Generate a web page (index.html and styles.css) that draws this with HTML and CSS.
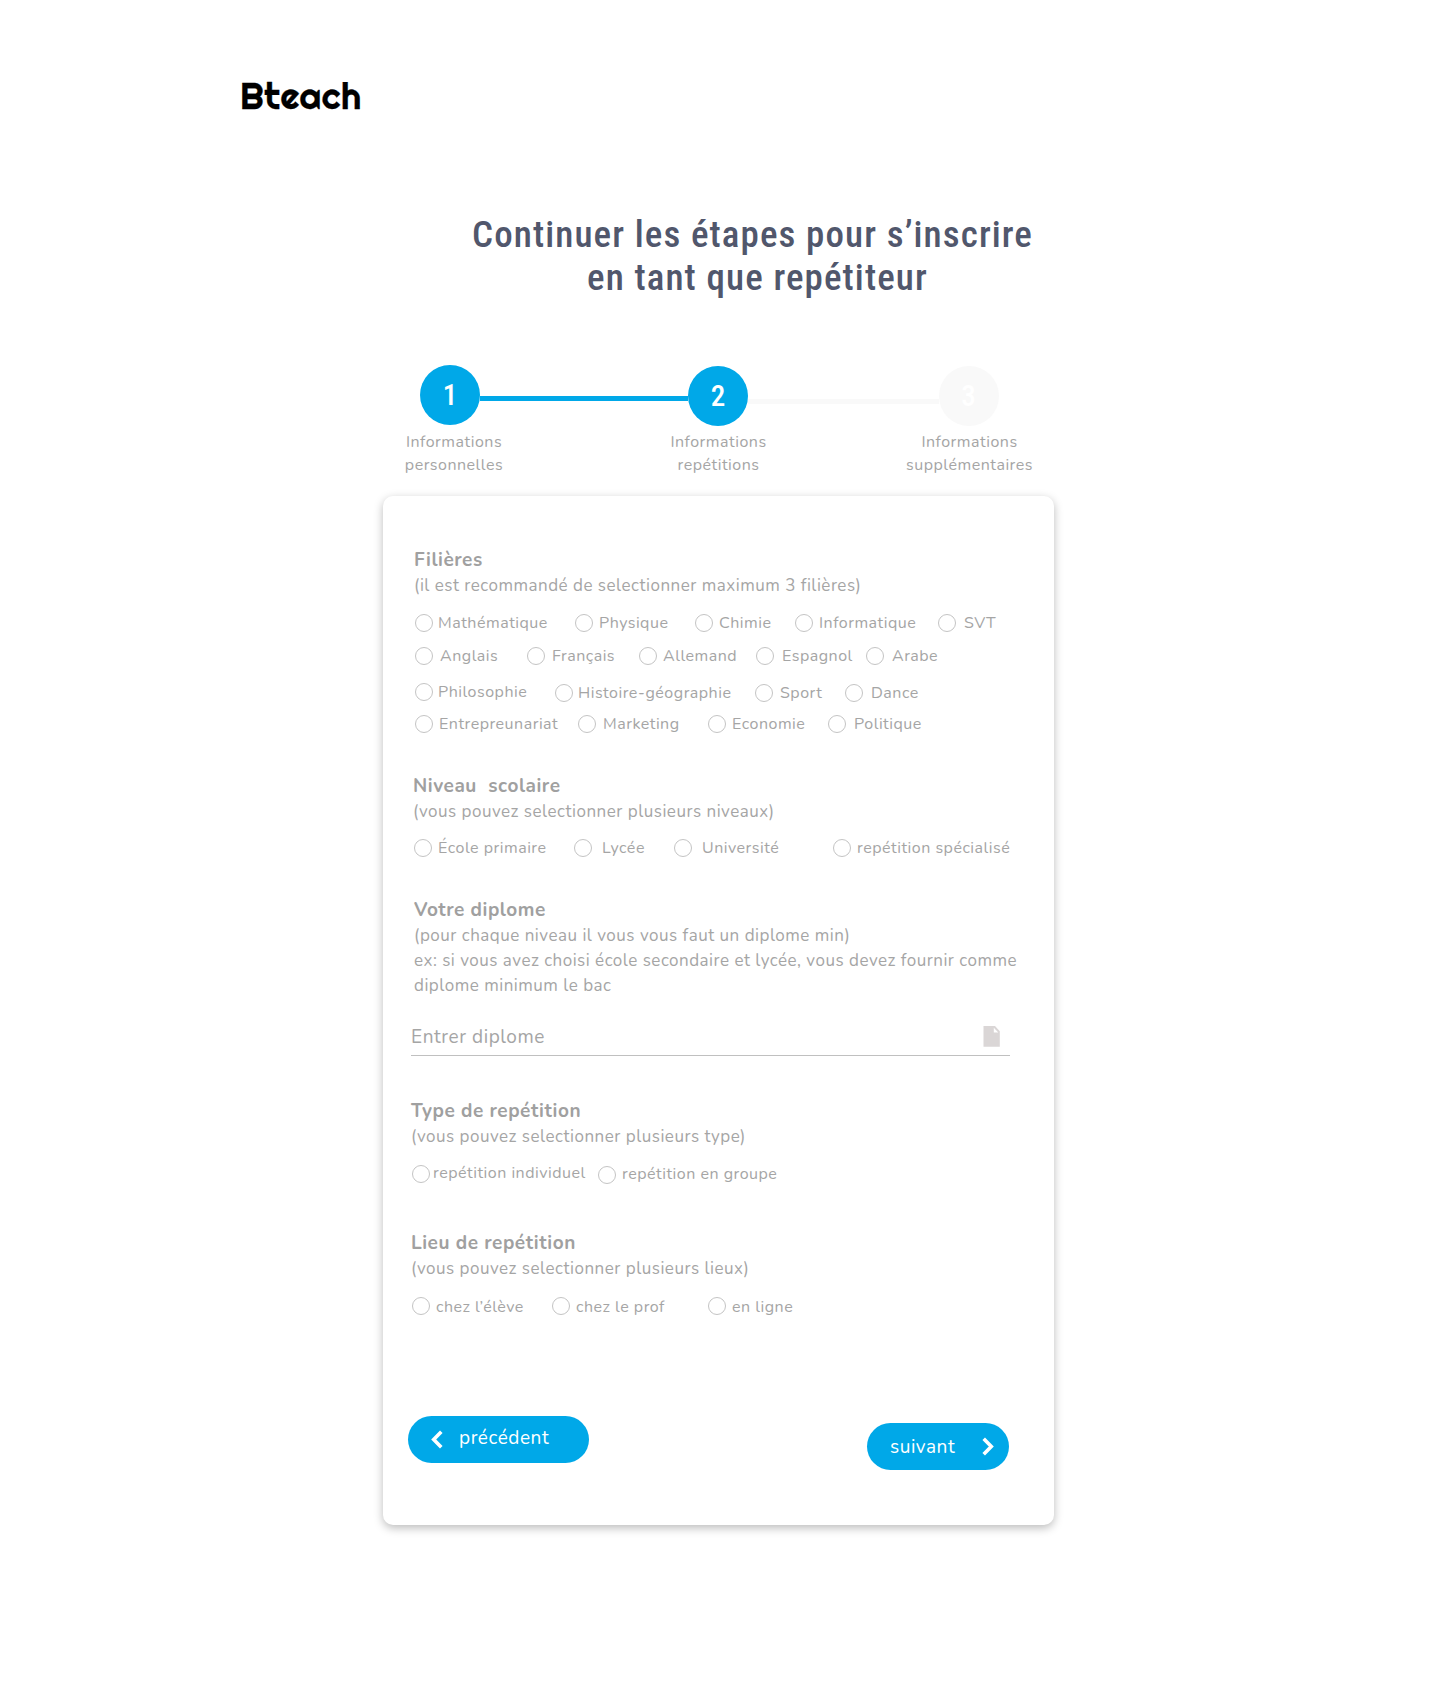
FILE: index.html
```html
<!DOCTYPE html>
<html lang="fr">
<head>
<meta charset="utf-8">
<title>Bteach</title>
<link rel="stylesheet" href="styles.css">
</head>
<body>
<header class="logo">Bteach</header>
<h1 class="headline"><span>Continuer les étapes pour s’inscrire</span><span class="line-b">en tant que repétiteur</span></h1>

<nav class="steps">
  <div class="dot first">1</div><div class="bar done"></div><div class="dot">2</div><div class="bar"></div><div class="dot todo">3</div>
</nav>
<div class="captions">
  <p>Informations<br>personnelles</p>
  <p>Informations<br>repétitions</p>
  <p>Informations<br>supplémentaires</p>
</div>

<main class="card">
  <section class="group subjects">
    <h2>Filières</h2>
    <p class="hint">(il est recommandé de selectionner maximum 3 filières)</p>
    <div class="row r1">
      <label class="opt"><i></i><span>Mathématique</span></label>
      <label class="opt g6"><i></i><span>Physique</span></label>
      <label class="opt g6"><i></i><span>Chimie</span></label>
      <label class="opt g6"><i></i><span>Informatique</span></label>
      <label class="opt g8"><i></i><span>SVT</span></label>
    </div>
    <div class="row r2">
      <label class="opt g7"><i></i><span>Anglais</span></label>
      <label class="opt g7"><i></i><span>Français</span></label>
      <label class="opt g6"><i></i><span>Allemand</span></label>
      <label class="opt g8"><i></i><span>Espagnol</span></label>
      <label class="opt g8"><i></i><span>Arabe</span></label>
    </div>
    <div class="row r3">
      <label class="opt"><i></i><span>Philosophie</span></label>
      <label class="opt low"><i></i><span>Histoire-géographie</span></label>
      <label class="opt g7 low"><i></i><span>Sport</span></label>
      <label class="opt g8 low"><i></i><span>Dance</span></label>
    </div>
    <div class="row r4">
      <label class="opt g6"><i></i><span>Entrepreunariat</span></label>
      <label class="opt g7"><i></i><span>Marketing</span></label>
      <label class="opt g6"><i></i><span>Economie</span></label>
      <label class="opt g8"><i></i><span>Politique</span></label>
    </div>
  </section>

  <section class="group levels">
    <h2>Niveau&nbsp; scolaire</h2>
    <p class="hint">(vous pouvez selectionner plusieurs niveaux)</p>
    <div class="row r5">
      <label class="opt g6"><i></i><span>École primaire</span></label>
      <label class="opt g9"><i></i><span>Lycée</span></label>
      <label class="opt g9"><i></i><span>Université</span></label>
      <label class="opt g6"><i></i><span>repétition spécialisé</span></label>
    </div>
  </section>

  <section class="group degree">
    <h2>Votre diplome</h2>
    <p class="hint">(pour chaque niveau il vous vous faut un diplome min)<br>ex: si vous avez choisi école secondaire et lycée, vous devez fournir comme<br>diplome minimum le bac</p>
  </section>
  <div class="field">
    <span>Entrer diplome</span>
    <svg width="17" height="21" viewBox="0 0 17 21"><path fill="#dad6d6" fill-rule="evenodd" d="M.5 0H12l4.800 5.200V20.800H.5ZM10.800 1.800V6.500H15.300Z"/></svg>
  </div>

  <section class="group kind">
    <h2>Type de repétition</h2>
    <p class="hint">(vous pouvez selectionner plusieurs type)</p>
    <div class="row r6">
      <label class="opt g3"><i></i><span>repétition individuel</span></label>
      <label class="opt g6 low"><i></i><span>repétition en groupe</span></label>
    </div>
  </section>

  <section class="group place">
    <h2>Lieu de repétition</h2>
    <p class="hint">(vous pouvez selectionner plusieurs lieux)</p>
    <div class="row r7">
      <label class="opt g6"><i></i><span>chez l’élève</span></label>
      <label class="opt g6"><i></i><span>chez le prof</span></label>
      <label class="opt g6"><i></i><span>en ligne</span></label>
    </div>
  </section>

  <footer class="actions">
    <button class="btn prev"><svg width="12" height="19" viewBox="0 0 12 19"><path d="M10.300 1.700 2.700 9.500l7.600 7.800" fill="none" stroke="#fff" stroke-width="3.600"/></svg><span>précédent</span></button>
    <button class="btn next"><span>suivant</span><svg width="12" height="19" viewBox="0 0 12 19"><path d="M1.700 1.700 9.300 9.500l-7.600 7.800" fill="none" stroke="#fff" stroke-width="3.600"/></svg></button>
  </footer>
</main>
</body>
</html>
```
FILE: styles.css
```css
* { box-sizing: border-box; }
body {
  margin: 0;
  min-height: 1701px;
  background: #fff;
  color: #a5a5a5;
  font-family: Nunito, Lato, sans-serif;
  font-weight: 400;
}
h1, h2, p { margin: 0; }

.logo {
  padding: 74px 0 0 240px;
  height: 213px;
  font: 400 36px/44px Righteous, Lato, sans-serif;
  letter-spacing: .35px;
  -webkit-text-stroke: .3px #000;
  color: #000;
}
.headline {
  margin-left: 472px;
  font: 500 37px/43px "Roboto Condensed", Roboto, sans-serif;
  letter-spacing: 1.1px;
  color: #51576c;
  white-space: nowrap;
}
.headline span { display: block; }
.headline .line-b { margin-left: 115px; }

.steps {
  display: flex;
  align-items: flex-start;
  margin: 67px 0 0 420px;
}
.dot {
  width: 60px;
  height: 60px;
  border-radius: 50%;
  background: #00a8e8;
  color: #fff;
  font: 500 29px/60px "Roboto Condensed", Roboto, sans-serif;
  text-align: center;
}
.dot.first { margin-top: -1px; }
.dot.todo { background: #f9f9f9; }
.bar { width: 190.500px; height: 5px; margin-top: 33px; background: #f9f9f9; }
.bar.done { width: 208px; margin-top: 30px; background: #00a8e8; }

.captions {
  display: grid;
  grid-template-columns: 264px 265px 237px;
  margin: 5px 0 0 322px;
  height: 65px;
  font-size: 16px;
  line-height: 23px;
  letter-spacing: .5px;
  text-align: center;
}

.card {
  width: 671px;
  height: 1029px;
  margin-left: 383px;
  padding: 51px 0 0 28px;
  border-radius: 10px;
  background: #fff;
  box-shadow: 0 3px 10px rgba(0, 0, 0, .27);
}
.group h2 { padding-top: 1px; font-size: 19px; line-height: 25px; letter-spacing: .55px; color: #a0a0a0; }
.hint { font-size: 17px; line-height: 25px; letter-spacing: .5px; white-space: nowrap; }
.subjects { padding-left: 3px; }
.levels { padding-left: 2px; margin-top: 39px; }
.degree { padding-left: 3px; margin-top: 39px; }
.kind { margin-top: 42px; }
.place { margin-top: 47px; }

.row { display: grid; height: 20px; margin: 14px 0 0 1px; }
.r1 { grid-template-columns: 160px 120px 100px 143px 80px; margin-top: 15px; }
.r2 { grid-template-columns: 112px 112px 117px 110px 80px; margin-top: 13px; }
.r3 { grid-template-columns: 140px 200px 90px 80px; margin-top: 15px; }
.r4 { grid-template-columns: 163px 130px 120px 80px; margin-top: 13px; }
.r5 { grid-template-columns: 160px 100px 159px 180px; }
.r6 { grid-template-columns: 186px 180px; }
.r7 { grid-template-columns: 140px 156px 100px; margin-top: 15px; }

.opt {
  display: flex;
  align-items: center;
  gap: 4px;
  font-size: 16px;
  line-height: 18px;
  letter-spacing: .5px;
  white-space: nowrap;
}
.opt i { flex: none; width: 18px; height: 18px; margin-right: 1px; border: 1px solid #c4c4c4; border-radius: 50%; }
.opt span { padding-bottom: 1px; }
.r3 .opt span { padding: 1px 0 0; }
.r7 .opt span { padding: 1px 0 0; }
.g3 { gap: 2px; }
.g6 { gap: 5px; }
.g7 { gap: 6px; }
.g8 { gap: 7px; }
.g9 { gap: 9px; }
.low { padding-top: 2px; }

.field {
  display: flex;
  justify-content: space-between;
  width: 599px;
  height: 36px;
  margin-top: 22px;
  padding: 6px 10px 0 0;
  border-bottom: 1px solid #c0c0c0;
  font-size: 19px;
  line-height: 22px;
  letter-spacing: .57px;
}

.actions { display: flex; margin: 100px 0 0 -3px; }
.btn {
  display: flex;
  align-items: center;
  height: 47px;
  padding: 0 0 0 23px;
  border: 0;
  border-radius: 24px;
  background: #00a8e8;
  color: #fff;
  font: 400 19px/24px Nunito, Lato, sans-serif;
  letter-spacing: .55px;
}
.prev { width: 181px; gap: 16px; padding-left: 23px; }
.prev span { padding-bottom: 4px; }
.next { width: 142px; margin: 7px 0 0 278px; justify-content: space-between; padding-right: 15px; }
```
